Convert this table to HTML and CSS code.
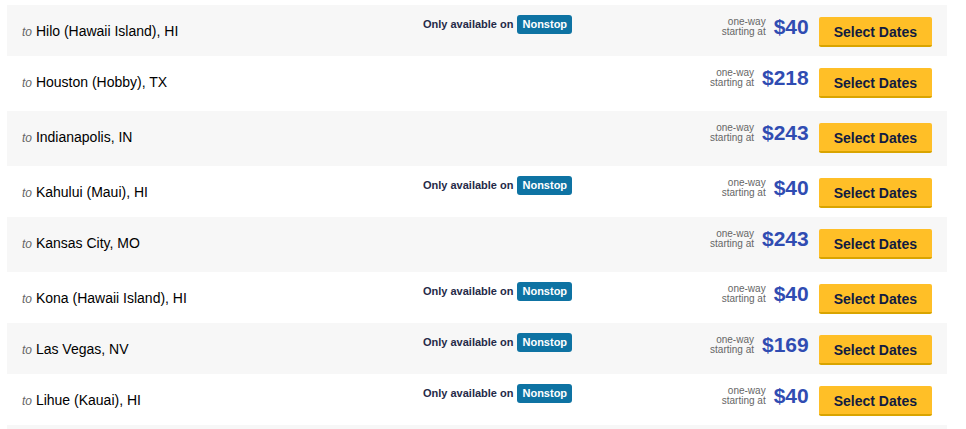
FILE: index.html
```html
<html>
    <head>
        <title>Fares from this city</title>
        <link rel="stylesheet" href="styles.css">
    </head>
    <body>
        <div id="fares">
            <div class="route nonstop">
                <div class="dest"><span class="to">to</span> Hilo (Hawaii Island), HI</div>
                <div class="note">Only available on <span class="badge">Nonstop</span></div>
                <div class="fare">
                    <div class="label">one-way<br>starting at</div>
                    <div class="price">$40</div>
                    <div class="select">Select Dates</div>
                </div>
            </div>
            <div class="route">
                <div class="dest"><span class="to">to</span> Houston (Hobby), TX</div>
                <div class="note"></div>
                <div class="fare">
                    <div class="label">one-way<br>starting at</div>
                    <div class="price">$218</div>
                    <div class="select">Select Dates</div>
                </div>
            </div>
            <div class="route">
                <div class="dest"><span class="to">to</span> Indianapolis, IN</div>
                <div class="note"></div>
                <div class="fare">
                    <div class="label">one-way<br>starting at</div>
                    <div class="price">$243</div>
                    <div class="select">Select Dates</div>
                </div>
            </div>
            <div class="route nonstop">
                <div class="dest"><span class="to">to</span> Kahului (Maui), HI</div>
                <div class="note">Only available on <span class="badge">Nonstop</span></div>
                <div class="fare">
                    <div class="label">one-way<br>starting at</div>
                    <div class="price">$40</div>
                    <div class="select">Select Dates</div>
                </div>
            </div>
            <div class="route">
                <div class="dest"><span class="to">to</span> Kansas City, MO</div>
                <div class="note"></div>
                <div class="fare">
                    <div class="label">one-way<br>starting at</div>
                    <div class="price">$243</div>
                    <div class="select">Select Dates</div>
                </div>
            </div>
            <div class="route nonstop">
                <div class="dest"><span class="to">to</span> Kona (Hawaii Island), HI</div>
                <div class="note">Only available on <span class="badge">Nonstop</span></div>
                <div class="fare">
                    <div class="label">one-way<br>starting at</div>
                    <div class="price">$40</div>
                    <div class="select">Select Dates</div>
                </div>
            </div>
            <div class="route nonstop">
                <div class="dest"><span class="to">to</span> Las Vegas, NV</div>
                <div class="note">Only available on <span class="badge">Nonstop</span></div>
                <div class="fare">
                    <div class="label">one-way<br>starting at</div>
                    <div class="price">$169</div>
                    <div class="select">Select Dates</div>
                </div>
            </div>
            <div class="route nonstop">
                <div class="dest"><span class="to">to</span> Lihue (Kauai), HI</div>
                <div class="note">Only available on <span class="badge">Nonstop</span></div>
                <div class="fare">
                    <div class="label">one-way<br>starting at</div>
                    <div class="price">$40</div>
                    <div class="select">Select Dates</div>
                </div>
            </div>
            <div class="route more"></div>
        </div>
    </body>
</html>
```

FILE: styles.css
```css
body {
    margin: 0;
    background-color: #fff;
    font-family: "Liberation Sans", Arial, Helvetica, sans-serif;
}
#fares {
    padding: 5px 19px 0 7px;
}
.route {
    display: flex;
    align-items: flex-start;
    box-sizing: border-box;
    height: 55px;
    padding: 10px 15px 0 15px;
}
.route.nonstop {
    height: 51px;
}
.route.more {
    height: 20px;
}
.route:nth-child(odd) {
    background-color: #f7f7f7;
}
.dest {
    flex: 0 0 401px;
    font-size: 14px;
    line-height: 33px;
    color: #000;
}
.to {
    font-size: 12px;
    font-style: italic;
    color: #666;
}
.note {
    flex: 1;
    display: flex;
    align-items: center;
    gap: 4px;
    font-size: 11px;
    font-weight: bold;
    line-height: 19px;
    color: #252a48;
}
.badge {
    display: inline-block;
    height: 19px;
    padding: 0 5px;
    border-radius: 3px;
    background-color: #0e73a3;
    color: #fff;
}
.fare {
    display: flex;
    align-items: flex-start;
}
.label {
    margin-top: 2px;
    font-size: 10px;
    line-height: 10px;
    text-align: right;
    color: #666;
}
.price {
    margin: 1px 0 0 8px;
    font-size: 21px;
    font-weight: bold;
    line-height: 22px;
    color: #304cb2;
}
.select {
    margin: 2px 0 0 10px;
    box-sizing: border-box;
    height: 30px;
    padding: 0 15px;
    border-bottom: 2px solid #d9a400;
    border-radius: 2px;
    background-color: #ffbf27;
    font-size: 14px;
    font-weight: bold;
    line-height: 30px;
    color: #111b40;
    cursor: pointer;
}
```
